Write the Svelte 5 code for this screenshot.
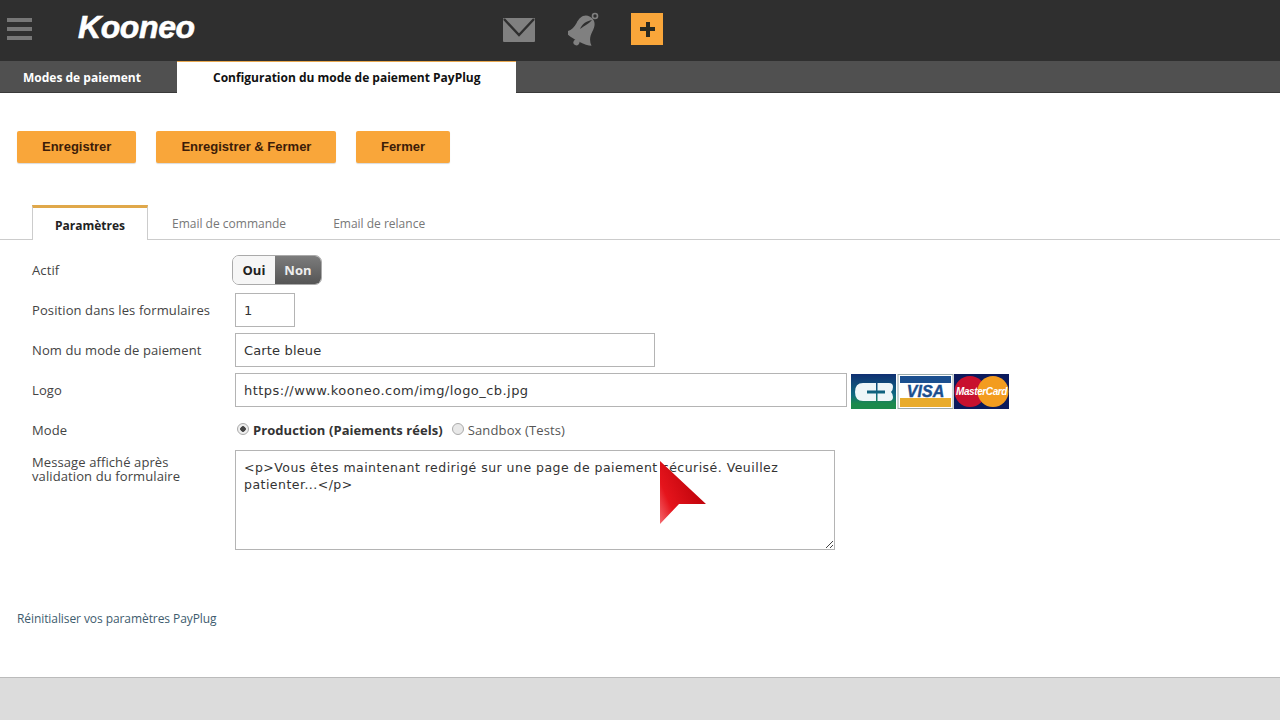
<script>
	const tabs = ['Email de commande', 'Email de relance'];
</script>

<div class="page">
	<header class="topbar">
		<div class="burger"><span></span><span></span><span></span></div>
		<div class="logo">Kooneo</div>
		<div class="top-icons">
			<svg class="mail" width="32" height="24" viewBox="0 0 32 24">
				<path d="M1 0H31Q32 0 32 1V23Q32 24 31 24H1Q0 24 0 23V1Q0 0 1 0Z" fill="#808080" />
				<path d="M1 1L16 17L31 1" fill="none" stroke="#2f2f2f" stroke-width="2.4" />
			</svg>
			<svg class="bell" width="32" height="34" viewBox="0 0 32 34">
				<g transform="translate(15 18) rotate(28)">
					<path d="M0 -15C7 -15 9 -9 9 -3C9 3 11 7 15 10C8 13 -8 13 -15 10C-11 7 -9 3 -9 -3C-9 -9 -7 -15 0 -15Z" fill="#808080" />
					<circle cx="0" cy="14" r="3" fill="#808080" />
				</g>
				<circle cx="27" cy="4" r="2.500" fill="none" stroke="#808080" stroke-width="1.600" />
				<path d="M12 17C14 12 18 9 24 8C21 12 17 13 12 17Z" fill="#2f2f2f" />
			</svg>
			<div class="plus"><span></span></div>
		</div>
	</header>

	<nav class="tabbar">
		<div class="tab">Modes de paiement</div>
		<div class="tab active">Configuration du mode de paiement PayPlug</div>
	</nav>

	<main class="content">
		<div class="actions">
			<button>Enregistrer</button>
			<button>Enregistrer &amp; Fermer</button>
			<button class="last">Fermer</button>
		</div>

		<div class="subtabs">
			<div class="subtab current">Paramètres</div>
			{#each tabs as t}
				<div class="subtab">{t}</div>
			{/each}
		</div>

		<div class="form">
			<div class="row">
				<div class="label">Actif</div>
				<div class="toggle"><span class="oui">Oui</span><span class="non">Non</span></div>
			</div>
			<div class="row">
				<div class="label">Position dans les formulaires</div>
				<div class="field small">1</div>
			</div>
			<div class="row">
				<div class="label">Nom du mode de paiement</div>
				<div class="field medium">Carte bleue</div>
			</div>
			<div class="row">
				<div class="label">Logo</div>
				<div class="field large">https://www.kooneo.com/img/logo_cb.jpg</div>
				<div class="cards">
					<svg width="158" height="35" viewBox="0 0 158 35">
						<defs>
							<linearGradient id="cb" x1="0" y1="0" x2="0" y2="1">
								<stop offset="0" stop-color="#0f2f72" />
								<stop offset="0.6" stop-color="#0f6a80" />
								<stop offset="0.85" stop-color="#1c8a4c" />
							</linearGradient>
						</defs>
						<rect x="0" y="0" width="45" height="35" fill="url(#cb)" />
						<path d="M25 9H12Q4 9 4 18Q4 27 12 27H25V19.500H16V16.500H25Z" fill="#eef6f8" />
						<path d="M26.500 9H38Q42 9 42 13Q42 16 40 18Q42 20 42 23Q42 27 38 27H26.500V19.500H34V16.500H26.500Z" fill="#eef6f8" />
						<rect x="47" y="0.500" width="55" height="34" fill="#fff" stroke="#9aa" stroke-width="1" />
						<rect x="49" y="2" width="51" height="7" fill="#1b4f8f" />
						<rect x="49" y="24" width="51" height="9" fill="#e8ac2c" />
						<text x="74.500" y="23" text-anchor="middle" class="visa">VISA</text>
						<rect x="103" y="0" width="55" height="35" fill="#0b1a5c" />
						<circle cx="119" cy="17.500" r="15.500" fill="#c8102e" />
						<circle cx="142" cy="17.500" r="15.500" fill="#f39c1f" />
						<text x="130.500" y="21" text-anchor="middle" class="mc">MasterCard</text>
					</svg>
				</div>
			</div>
			<div class="row">
				<div class="label">Mode</div>
				<div class="radios">
					<span class="radio on"></span><b>Production (Paiements réels)</b>
					<span class="radio"></span><span class="sandbox">Sandbox (Tests)</span>
				</div>
			</div>
			<div class="row top">
				<div class="label">Message affiché après validation du formulaire</div>
				<div class="area">
					&lt;p&gt;Vous êtes maintenant redirigé sur une page de paiement sécurisé. Veuillez patienter...&lt;/p&gt;
					<svg class="grip" width="9" height="9" viewBox="0 0 9 9">
						<path d="M1 8L8 1M5 8L8 5" stroke="#444" stroke-width="1" fill="none" />
					</svg>
				</div>
			</div>
		</div>

		<a class="reset" href="#reset">Réinitialiser vos paramètres PayPlug</a>
	</main>

	<footer class="foot"></footer>

	<svg class="pointer" width="46" height="63" viewBox="0 0 46 63">
		<defs>
			<linearGradient id="red" x1="0" y1="1" x2="1" y2="0.400">
				<stop offset="0" stop-color="#f4696f" />
				<stop offset="0.3" stop-color="#e5141c" />
				<stop offset="1" stop-color="#b80008" />
			</linearGradient>
		</defs>
		<path d="M0 0L46 43H19L0 63Z" fill="url(#red)" />
	</svg>
</div>

<style>
	:global(body) {
		margin: 0;
		background: #fff;
	}

	.page {
		position: relative;
		width: 1280px;
		height: 720px;
		overflow: hidden;
		display: flex;
		flex-direction: column;
		font-family: 'Open Sans', sans-serif;
		color: #333;
	}

	.topbar {
		height: 61px;
		background: #2f2f2f;
		display: flex;
		align-items: center;
		flex: none;
	}

	.burger {
		width: 25px;
		margin-left: 7px;
		display: flex;
		flex-direction: column;
		gap: 5px;
		margin-top: -3px;
	}

	.burger span {
		height: 4px;
		background: #777;
	}

	.logo {
		margin-left: 46px;
		width: 120px;
		margin-top: -6px;
		font: italic bold 32px 'Liberation Sans', sans-serif;
		letter-spacing: -0.400px;
		-webkit-text-stroke: 0.6px #fff;
		color: #fff;
	}

	.top-icons {
		margin-left: 305px;
		display: flex;
		align-items: center;
		margin-top: -3px;
	}

	.mail {
		margin-top: 1px;
	}

	.bell {
		margin-left: 33px;
		margin-top: -1px;
	}

	.plus {
		margin-left: 31px;
		width: 32px;
		height: 32px;
		background: #f9a63a;
		position: relative;
	}

	.plus span {
		position: absolute;
		left: 9px;
		top: 14px;
		width: 15px;
		height: 4px;
		background: #2a2a20;
	}

	.plus span::after {
		content: '';
		position: absolute;
		left: 5.500px;
		top: -5.500px;
		width: 4px;
		height: 15px;
		background: #2a2a20;
	}

	.tabbar {
		height: 32px;
		background: #505050;
		box-shadow: inset 0 -1px 0 #3a3a3a;
		display: flex;
		flex: none;
	}

	.tab {
		width: 177px;
		box-sizing: border-box;
		padding: 8px 0 0 23px;
		font-size: 12px;
		font-weight: 700;
		color: #fff;
	}

	.tab.active {
		width: 339px;
		padding: 7px 0 0 36px;
		background: #fff;
		color: #111;
		border-top: 1px solid #e8a850;
	}

	.content {
		flex: 1;
		display: flex;
		flex-direction: column;
		border-bottom: 1px solid #bbb;
	}

	.actions {
		display: flex;
		gap: 20px;
		padding: 38px 0 0 17px;
	}

	button {
		height: 32px;
		border: 0;
		border-radius: 2px;
		background: #f9a63a;
		color: #3c1c08;
		font: bold 13px 'Liberation Sans', sans-serif;
		padding: 0 25px 2px;
		box-shadow: 0 1px 1px rgba(0, 0, 0, 0.15);
	}

	button.last {
		padding: 0 24.500px 2px;
	}

	.subtabs {
		margin-top: 42px;
		padding-left: 32px;
		height: 34px;
		display: flex;
		border-bottom: 1px solid #ccc;
	}

	.subtab {
		font-size: 12px;
		color: #777;
		padding: 10px 0 0 0;
		margin-left: 47px;
	}

	.subtab:nth-child(2) {
		margin-left: 24px;
	}

	.subtab.current {
		margin-left: 0;
		width: 116px;
		height: 35px;
		box-sizing: border-box;
		padding: 9px 0 0 0;
		text-align: center;
		font-weight: 700;
		color: #222;
		background: #fff;
		border: 1px solid #ccc;
		border-bottom: 0;
		border-top: 3px solid #e0a84a;
	}

	.form {
		padding: 13px 0 0 32px;
		display: flex;
		flex-direction: column;
		gap: 6px;
	}

	.row {
		display: flex;
		align-items: center;
		height: 34px;
		font-size: 13px;
		letter-spacing: 0.100px;
		color: #444;
	}

	.row.top {
		align-items: flex-start;
		height: 100px;
		margin-top: -3px;
	}

	.label {
		width: 203px;
		flex: none;
		line-height: 14px;
	}

	.row.top .label {
		padding-top: 5px;
		width: 180px;
		margin-right: 23px;
	}

	.toggle {
		margin-left: -3px;
		width: 90px;
		height: 30px;
		box-sizing: border-box;
		display: flex;
		border: 1px solid #aaa;
		border-radius: 7px;
		overflow: hidden;
		font-weight: 700;
		font-size: 13px;
		line-height: 28px;
		text-align: center;
	}

	.oui {
		width: 42px;
		background: #f6f6f6;
		color: #222;
	}

	.non {
		flex: 1;
		color: #eee;
		background: linear-gradient(#7c7c7c, #555);
	}

	.field {
		height: 34px;
		box-sizing: border-box;
		border: 1px solid #b4b4b4;
		padding: 1px 8px 0;
		font: 13px/32px 'DejaVu Sans', sans-serif;
		letter-spacing: 0.150px;
		color: #333;
		background: #fff;
	}

	.small {
		width: 60px;
	}

	.medium {
		width: 420px;
	}

	.large {
		width: 612px;
		letter-spacing: 0.450px;
	}

	.cards {
		margin-left: 4px;
		margin-top: 2px;
		height: 35px;
	}

	.visa {
		font: italic bold 16px 'Liberation Sans', sans-serif;
		fill: #1b4f8f;
		stroke: #1b4f8f;
		stroke-width: 0.4px;
	}

	.mc {
		font: italic bold 10px 'Liberation Sans', sans-serif;
		letter-spacing: -0.400px;
		fill: #fff;
	}

	.radios {
		display: flex;
		align-items: center;
		margin-left: 2px;
		font-size: 13px;
	}

	.radios b {
		margin-left: 4px;
		color: #333;
		letter-spacing: 0.070px;
	}

	.sandbox {
		margin-left: 4px;
		color: #555;
		letter-spacing: 0.130px;
	}

	.radio {
		width: 12px;
		height: 12px;
		box-sizing: border-box;
		border-radius: 50%;
		border: 1px solid #aaa;
		background: #e8e8e8;
		margin-top: -3px;
	}

	.radio:not(.on) {
		margin-left: 9px;
	}

	.radio.on {
		background: radial-gradient(circle, #444 0 2.500px, #eee 3px);
	}

	.area {
		position: relative;
		width: 600px;
		height: 100px;
		box-sizing: border-box;
		border: 1px solid #b4b4b4;
		padding: 8px 8px;
		font: 12.500px/17px 'DejaVu Sans', sans-serif;
		letter-spacing: 0.470px;
		color: #333;
	}

	.grip {
		position: absolute;
		right: 0;
		bottom: 0;
	}

	.reset {
		margin: 60px 0 0 17px;
		font-size: 12px;
		letter-spacing: -0.080px;
		color: #3e5c6e;
		text-decoration: none;
	}

	.foot {
		height: 42px;
		flex: none;
		background: #dcdcdc;
	}

	.pointer {
		position: absolute;
		left: 660px;
		top: 461px;
	}
</style>
